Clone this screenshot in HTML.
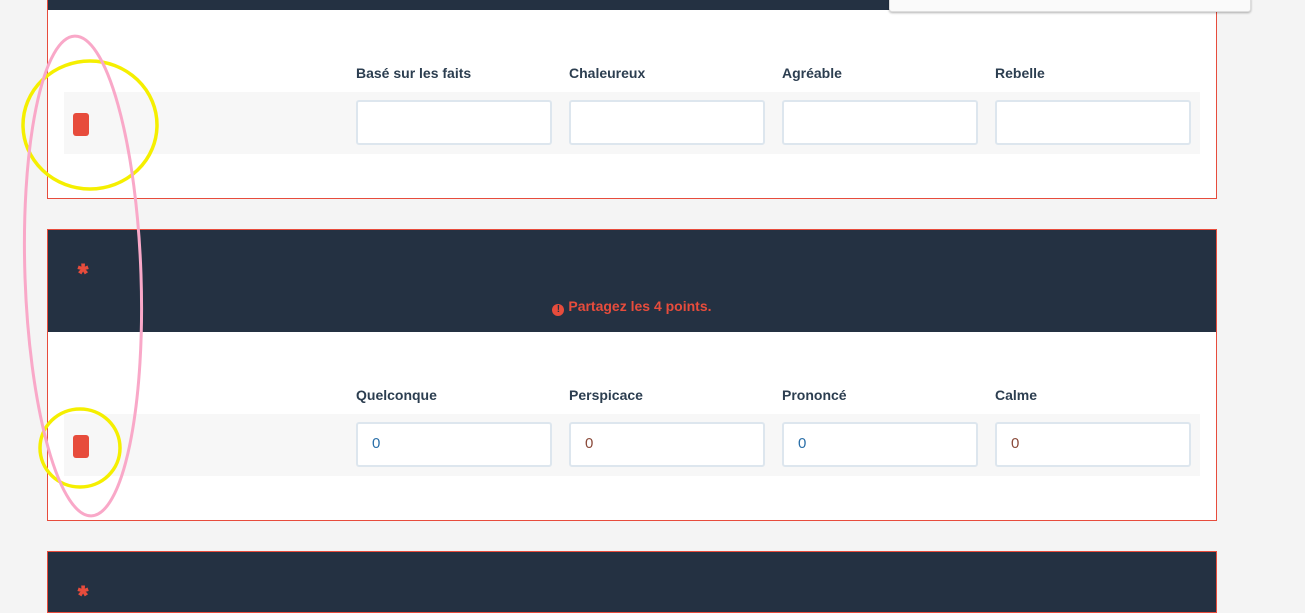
<!DOCTYPE html>
<html><head><meta charset="utf-8"><style>
body{margin:0;width:1305px;height:593px;background:#f4f4f4;font-family:"Liberation Sans",sans-serif;position:relative;overflow:hidden}
.card{position:absolute;left:47px;width:1168px;border:1px solid #e74c3c;background:#fff}
.hd{background:#243142;position:relative}
.row{position:absolute;left:16px;width:1136px;height:62px;background:#f7f7f7}
.lbl{position:absolute;font-size:14px;font-weight:bold;color:#2c3e50}
.inp{position:absolute;width:196px;height:45px;border:2px solid #dde6ee;border-radius:3px;background:#fff;box-sizing:border-box;font-size:15px;padding:11px 14px}
.flag{position:absolute;left:9px;top:21px;width:16px;height:23px;background:#e74c3c;border-radius:3px}
.ast{position:absolute;left:30px;color:#e74c3c;font-weight:bold;font-size:26px;-webkit-text-stroke:1px #e74c3c}
</style></head><body>
<div class="card" style="top:-2px;height:199px">
 <div class="hd" style="height:11px"></div>
 <div class="lbl" style="left:308px;top:66px">Basé sur les faits</div>
 <div class="lbl" style="left:521px;top:66px">Chaleureux</div>
 <div class="lbl" style="left:734px;top:66px">Agréable</div>
 <div class="lbl" style="left:947px;top:66px">Rebelle</div>
 <div class="row" style="top:93px"><div class="flag"></div>
  <div class="inp" style="left:292px;top:8px"></div><div class="inp" style="left:505px;top:8px"></div><div class="inp" style="left:718px;top:8px"></div><div class="inp" style="left:931px;top:8px"></div></div>
</div>
<div style="position:absolute;left:889px;top:-2px;width:360px;height:12px;background:#fafafa;border:1px solid #ddd;border-radius:0 0 3px 3px;box-shadow:0 1px 2px rgba(0,0,0,.3)"></div>
<div class="card" style="top:229px;height:290px">
 <div class="hd" style="height:102px">
  <div class="ast" style="top:28px">*</div>
  <div style="position:absolute;left:0;right:0;top:68px;text-align:center;color:#e74c3c;font-weight:bold;font-size:14px"><span style="display:inline-block;width:12px;height:12px;border-radius:50%;background:#e74c3c;color:#243142;font-size:10px;line-height:12px;vertical-align:-1px">!</span> Partagez les 4 points.</div>
 </div>
 <div class="lbl" style="left:308px;top:157px">Quelconque</div>
 <div class="lbl" style="left:521px;top:157px">Perspicace</div>
 <div class="lbl" style="left:734px;top:157px">Prononcé</div>
 <div class="lbl" style="left:947px;top:157px">Calme</div>
 <div class="row" style="top:184px"><div class="flag"></div>
  <div class="inp" style="left:292px;top:8px;color:#2a6fa8">0</div><div class="inp" style="left:505px;top:8px;color:#8a4a3a">0</div><div class="inp" style="left:718px;top:8px;color:#2a6fa8">0</div><div class="inp" style="left:931px;top:8px;color:#8a4a3a">0</div></div>
</div>
<div class="card" style="top:551px;height:60px">
 <div class="hd" style="height:60px"><div class="ast" style="top:28px">*</div></div>
</div>
<svg style="position:absolute;left:0;top:0" width="1305" height="593">
<ellipse cx="90" cy="125" rx="67" ry="64" fill="none" stroke="#f5ef00" stroke-width="3.5"/>
<ellipse cx="80" cy="448" rx="40" ry="39" fill="none" stroke="#f5ef00" stroke-width="3.5"/>
<ellipse cx="83" cy="276" rx="58" ry="240" transform="rotate(-2 83 276)" fill="none" stroke="#f9a8c8" stroke-width="3"/>
</svg>
</body></html>
